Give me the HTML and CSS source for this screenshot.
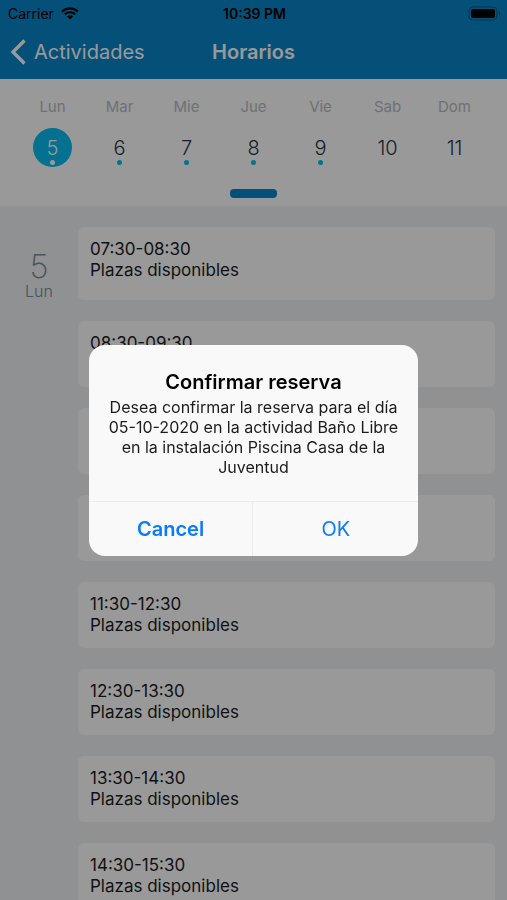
FILE: index.html
```
<!DOCTYPE html>
<html lang="es">
<head>
<meta charset="utf-8">
<meta name="viewport" content="width=device-width, initial-scale=1">
<title>Horarios</title>
<link rel="stylesheet" href="styles.css">
</head>
<body>
<div class="app">
  <header class="header">
    <div class="status">
      <span class="status-left">Carrier
        <svg class="wifi" viewBox="0 0 18 13" aria-hidden="true">
          <path d="M1 4.600a11.300 11.300 0 0 1 16 0M3.800 7.400a7.400 7.400 0 0 1 10.400 0" fill="none" stroke="currentColor" stroke-width="2.200"/>
          <path d="M5.900 9.500a4.400 4.400 0 0 1 6.200 0L9 12.600z" fill="currentColor"/>
        </svg>
      </span>
      <span class="status-time">10:39 PM</span>
      <svg class="battery" viewBox="0 0 33 15" aria-hidden="true">
        <rect x="1" y="1" width="28" height="13" rx="4" fill="none" stroke="#000" stroke-opacity=".3"/>
        <rect x="3" y="3" width="24" height="9" rx="2" fill="#000"/>
        <path d="M31 5q2 2.500 0 5z" fill="#000" fill-opacity=".35"/>
      </svg>
    </div>
    <nav class="nav">
      <a class="back" href="#">
        <svg class="chevron" viewBox="0 0 16 26" aria-hidden="true"><path d="M14.500 1.500L3 13l11.500 11.500" fill="none" stroke="currentColor" stroke-width="3.400"/></svg>
        Actividades
      </a>
      <h1 class="title">Horarios</h1>
    </nav>
  </header>

  <section class="week">
    <div class="days">
      <div class="day"><span class="name">Lun</span><button class="num dot selected">5</button></div>
      <div class="day"><span class="name">Mar</span><button class="num dot">6</button></div>
      <div class="day"><span class="name">Mie</span><button class="num dot">7</button></div>
      <div class="day"><span class="name">Jue</span><button class="num dot">8</button></div>
      <div class="day"><span class="name">Vie</span><button class="num dot">9</button></div>
      <div class="day"><span class="name">Sab</span><button class="num">10</button></div>
      <div class="day"><span class="name">Dom</span><button class="num">11</button></div>
    </div>
    <div class="knob"></div>
  </section>

  <main class="agenda">
    <div class="date"><span class="date-num">5</span><span class="date-name">Lun</span></div>
    <ul class="slots">
      <li class="slot">07:30-08:30<br>Plazas disponibles</li>
      <li class="slot">08:30-09:30</li>
      <li class="slot"></li>
      <li class="slot"></li>
      <li class="slot">11:30-12:30<br>Plazas disponibles</li>
      <li class="slot">12:30-13:30<br>Plazas disponibles</li>
      <li class="slot">13:30-14:30<br>Plazas disponibles</li>
      <li class="slot">14:30-15:30<br>Plazas disponibles</li>
    </ul>
  </main>
</div>

<div class="overlay">
  <div class="alert" role="alertdialog" aria-labelledby="alert-title" aria-describedby="alert-text">
    <div class="alert-body">
      <h2 class="alert-title" id="alert-title">Confirmar reserva</h2>
      <p class="alert-text" id="alert-text">Desea confirmar la reserva para el día 05-10-2020 en la actividad Baño Libre en la instalación Piscina Casa de la Juventud</p>
    </div>
    <div class="actions">
      <button class="action cancel">Cancel</button>
      <button class="action">OK</button>
    </div>
  </div>
</div>
</body>
</html>
```
FILE: styles.css
```
* { box-sizing: border-box; }

body {
  margin: 0;
  font-family: Inter, "Liberation Sans", sans-serif;
  color: #1c1c1e;
  background: #eff2f5;
}

button {
  font: inherit;
  border: 0;
  padding: 0;
  background: none;
}

.app {
  display: flex;
  flex-direction: column;
  height: 100vh;
  overflow: hidden;
}

.header {
  flex: none;
  background: #0886c8;
  color: #fff;
}

.status {
  display: grid;
  grid-template-columns: 1fr auto 1fr;
  align-items: center;
  height: 27px;
  padding: 0 6px 0 8px;
  color: #000;
  font-size: 14px;
}

.status-left {
  display: flex;
  align-items: center;
  gap: 7px;
}

.wifi { width: 18px; height: 13px; }
.status-time { font-weight: 600; }
.battery { width: 33px; height: 15px; justify-self: end; }

.nav {
  display: grid;
  grid-template-columns: 1fr auto 1fr;
  align-items: center;
  height: 52px;
  padding: 0 10px 2px;
}

.back {
  display: flex;
  align-items: center;
  gap: 8px;
  color: inherit;
  font-size: 20px;
  text-decoration: none;
}

.chevron { width: 16px; height: 26px; }

.title {
  margin: 0;
  font-size: 20px;
  font-weight: 600;
}

.week {
  flex: none;
  padding: 18px 19px 8px;
  background: #fff;
  border-bottom: 1px solid #f2f4f6;
}

.days {
  display: grid;
  grid-template-columns: repeat(7, 1fr);
}

.day {
  display: flex;
  flex-direction: column;
  align-items: center;
  gap: 11px;
}

.name {
  font-size: 15px;
  line-height: 20px;
  color: #b6bcc3;
}

.num {
  position: relative;
  width: 39px;
  height: 39px;
  border-radius: 50%;
  font-size: 20px;
  font-weight: 300;
  color: #2d3640;
}

.dot::after {
  content: "";
  position: absolute;
  left: 17px;
  bottom: 2px;
  width: 5px;
  height: 5px;
  border-radius: 50%;
  background: #05bdef;
}

.selected { background: #05bdef; color: #fff; }
.selected::after { background: #fff; }

.knob {
  width: 47px;
  height: 9px;
  margin: 22px auto 0;
  border-radius: 4px;
  background: #0886c8;
}

.agenda {
  display: flex;
  flex: 1;
  min-height: 0;
  padding: 20px 12px 0 0;
}

.date {
  display: flex;
  flex: none;
  flex-direction: column;
  align-items: center;
  width: 78px;
  padding-top: 22px;
  color: #7a8c99;
}

.date-num {
  font-size: 33px;
  line-height: 34px;
  font-weight: 200;
}

.date-name {
  font-size: 16px;
  line-height: 16px;
  font-weight: 300;
}

.slots {
  display: flex;
  flex: 1;
  flex-direction: column;
  gap: 21px;
  margin: 0;
  padding: 0;
  list-style: none;
}

.slot {
  flex: none;
  min-height: 66px;
  padding: 12px;
  border-radius: 6px;
  background: #fff;
  font-size: 17px;
  line-height: 21px;
}

.slot:first-child { padding-bottom: 19px; }

.overlay {
  position: fixed;
  inset: 0;
  display: flex;
  align-items: center;
  justify-content: center;
  background: rgba(0, 0, 0, .4);
}

.alert {
  width: 65%;
  border-radius: 16px;
  background: #f9f9f9;
  overflow: hidden;
  text-align: center;
}

.alert-body { padding: 23px 16px 24px; }

.alert-title {
  margin: 0 0 1px;
  font-size: 20px;
  line-height: 28px;
  font-weight: 600;
  color: #000;
}

.alert-text {
  margin: 0;
  font-size: 16px;
  line-height: 20px;
}

.actions {
  display: grid;
  grid-template-columns: 1fr 1fr;
  border-top: 1px solid #ececec;
}

.action {
  height: 54px;
  font-size: 20px;
  color: #0a7cf8;
}

.cancel {
  border-right: 1px solid #ececec;
  font-weight: 600;
}
```
